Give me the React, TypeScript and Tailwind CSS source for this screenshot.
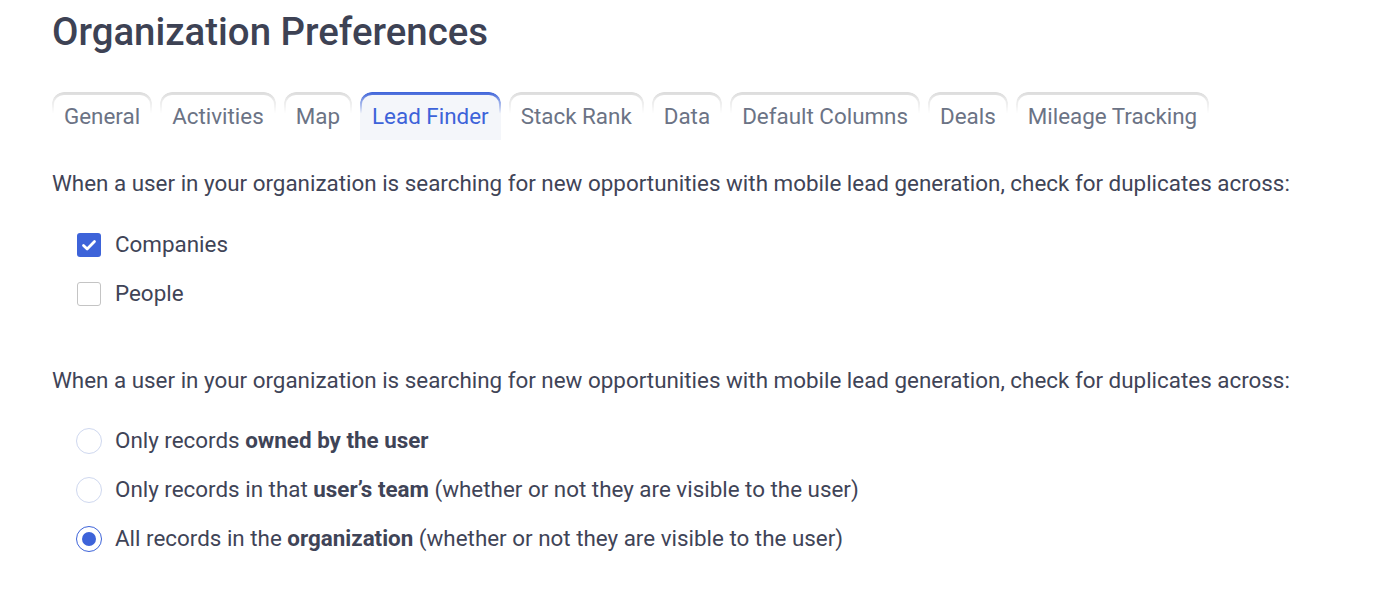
import React, { useState } from "react";

const tabs = [
  "General",
  "Activities",
  "Map",
  "Lead Finder",
  "Stack Rank",
  "Data",
  "Default Columns",
  "Deals",
  "Mileage Tracking",
];

const prompt =
  "When a user in your organization is searching for new opportunities with mobile lead generation, check for duplicates across:";

function Tab({ label, active, onClick }: { label: string; active: boolean; onClick: () => void }) {
  return (
    <button
      onClick={onClick}
      className={
        "relative h-[48px] px-[12px] text-[22.4px] leading-[46px] rounded-t-[12px] " +
        (active ? "bg-[#f4f6fa] text-[#3d63d9]" : "text-[#6b7385]")
      }
    >
      <span
        className={
          "pointer-events-none absolute inset-0 rounded-t-[12px] border-t-[3px] border-x-[2px] [mask-image:linear-gradient(to_bottom,black,transparent_45%)] " +
          (active ? "border-[#3d63d9]" : "border-[#dcdcdc]")
        }
      />
      {label}
    </button>
  );
}

function Checkbox({ checked, label, onChange }: { checked: boolean; label: string; onChange: () => void }) {
  return (
    <label className="flex items-center gap-[14px] h-[49px] cursor-pointer" onClick={onChange}>
      <span
        className={
          "w-[24px] h-[24px] rounded-[3px] flex items-center justify-center " +
          (checked ? "bg-[#3d63d9]" : "border border-[#c4c4c4] bg-white")
        }
      >
        {checked && (
          <svg width="20" height="20" viewBox="0 0 16 16" fill="none">
            <path d="M3.6 8.4l2.9 2.8L12.4 5.2" stroke="white" strokeWidth="2.2" strokeLinecap="round" strokeLinejoin="round" />
          </svg>
        )}
      </span>
      <span>{label}</span>
    </label>
  );
}

function Radio({ checked, children, onChange }: { checked: boolean; children: React.ReactNode; onChange: () => void }) {
  return (
    <label className="flex items-center gap-[13px] h-[49px] cursor-pointer" onClick={onChange}>
      <span
        className={
          "w-[26px] h-[26px] rounded-full flex items-center justify-center bg-white border " +
          (checked ? "border-[#3d63d9] border-[1.5px]" : "border-[#cfd8ef]")
        }
      >
        {checked && <span className="w-[14px] h-[14px] rounded-full bg-[#3d63d9]" />}
      </span>
      <span>{children}</span>
    </label>
  );
}

export default function App() {
  const [active, setActive] = useState("Lead Finder");
  const [companies, setCompanies] = useState(true);
  const [people, setPeople] = useState(false);
  const [scope, setScope] = useState("org");

  return (
    <div className="min-h-[606px] bg-white pl-[52px] pt-[8px] font-['Roboto',sans-serif] text-[#3f4457]">
      <h1 className="text-[38.4px] leading-[48px] font-medium text-[#3d4254]">Organization Preferences</h1>

      <div className="mt-[36px] flex gap-[8px]">
        {tabs.map((t) => (
          <Tab key={t} label={t} active={t === active} onClick={() => setActive(t)} />
        ))}
      </div>

      <p className="mt-[29px] text-[22.4px] leading-[28px]">{prompt}</p>

      <div className="mt-[23px] pl-[25px] text-[22.4px]">
        <Checkbox checked={companies} label="Companies" onChange={() => setCompanies(!companies)} />
        <Checkbox checked={people} label="People" onChange={() => setPeople(!people)} />
      </div>

      <p className="mt-[48px] text-[22.4px] leading-[28px]">{prompt}</p>

      <div className="mt-[22px] pl-[24px] text-[22.4px]">
        <Radio checked={scope === "user"} onChange={() => setScope("user")}>
          Only records <b className="font-bold">owned by the user</b>
        </Radio>
        <Radio checked={scope === "team"} onChange={() => setScope("team")}>
          Only records in that <b className="font-bold">user’s team</b> (whether or not they are visible to the user)
        </Radio>
        <Radio checked={scope === "org"} onChange={() => setScope("org")}>
          All records in the <b className="font-bold">organization</b> (whether or not they are visible to the user)
        </Radio>
      </div>
    </div>
  );
}
